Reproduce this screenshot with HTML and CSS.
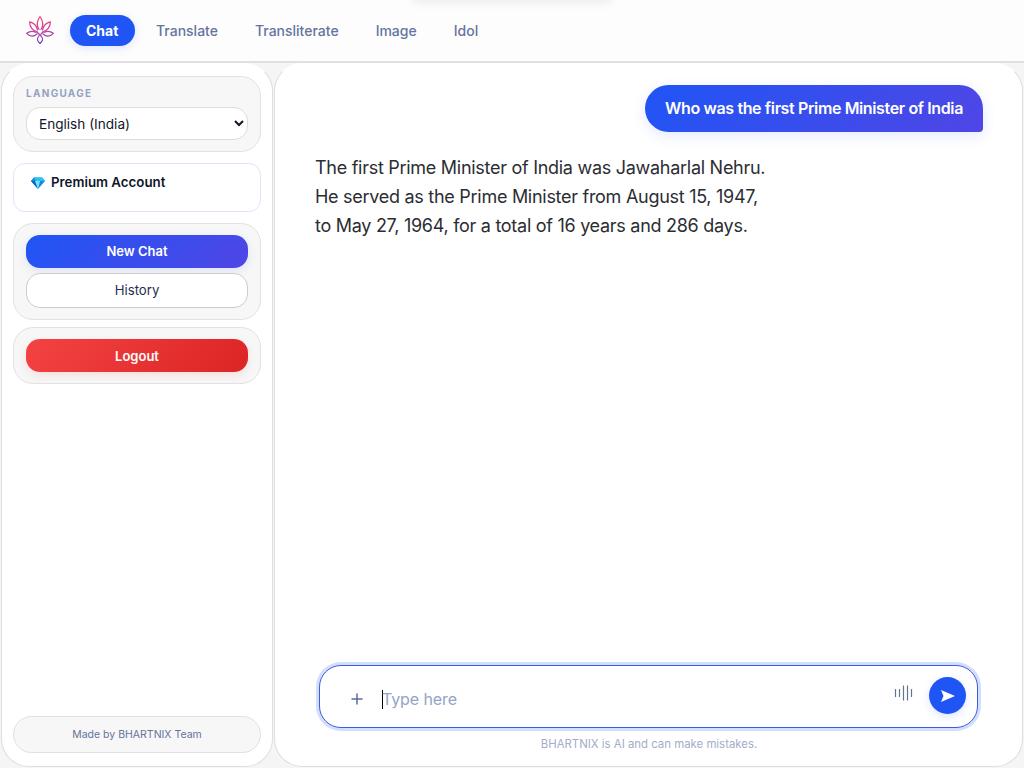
FILE: index.html
```html
<!DOCTYPE html>
<html lang="en">
<head>
  <meta charset="UTF-8">
  <meta name="viewport" content="width=device-width, initial-scale=1.0">
  <title>BHARTNIX</title>
  <link rel="stylesheet" href="styles.css">
</head>
<body>
  <header class="topbar">
    <svg class="logo" viewBox="0 0 30 30" fill="none" stroke="url(#lotus)" stroke-width="1.2" stroke-linejoin="round" stroke-linecap="round">
      <defs>
        <linearGradient id="lotus" gradientUnits="userSpaceOnUse" x1="0" y1="1" x2="0" y2="29">
          <stop offset="0" stop-color="#f5436e"/>
          <stop offset="0.5" stop-color="#c9419c"/>
          <stop offset="1" stop-color="#5b3fb5"/>
        </linearGradient>
      </defs>
      <path d="M14 14.500C11 10.500 12 6 15 1.500C18 6 19 10.500 16 14.500"/>
      <path d="M12.500 17C7.500 15.500 4.700 11.500 4.600 6.800C8.500 7.600 11.500 10.500 12.500 15"/>
      <path d="M17.500 17C22.500 15.500 25.300 11.500 25.400 6.800C21.500 7.600 18.500 10.500 17.500 15"/>
      <path d="M11 17.500C8 15.800 4.500 16.200 1.700 18.300C4.800 21.500 8.500 22 12 19"/>
      <path d="M19 17.500C22 15.800 25.500 16.200 28.300 18.300C25.200 21.500 21.500 22 18 19"/>
      <path d="M12.500 17.500L16.500 21.500C18.500 24 17.500 26.500 15 28.500C12.500 26.500 11.500 24 13.500 21.500L14 20.800M16 19L17.500 17.500"/>
    </svg>
    <nav class="tabs">
      <a class="tab active">Chat</a>
      <a class="tab">Translate</a>
      <a class="tab">Transliterate</a>
      <a class="tab">Image</a>
      <a class="tab">Idol</a>
    </nav>
  </header>

  <div class="layout">
    <aside class="sidebar">
      <div class="card language">
        <label class="label" for="lang">LANGUAGE</label>
        <select class="select" id="lang">
          <option>English (India)</option>
        </select>
      </div>

      <div class="premium">
        <svg class="gem" viewBox="0 0 14 12">
          <path fill="#1687e8" d="M3 0.500H11L14 4L7 12L0 4Z"/>
          <path fill="#0b62c4" d="M0 4H4L7 12Z"/>
          <path fill="#7be3fb" d="M4 4H9L7 12Z"/>
          <path fill="#28c4f2" d="M3 0.500H11L14 4H4Z"/>
          <path fill="#128fe8" d="M3 0.500L5 4H0Z"/>
        </svg>
        <span>Premium Account</span>
      </div>

      <div class="card actions">
        <button class="btn primary">New Chat</button>
        <button class="btn outline">History</button>
      </div>

      <div class="card">
        <button class="btn danger">Logout</button>
      </div>

      <div class="made-by">Made by BHARTNIX Team</div>
    </aside>

    <main class="chat">
      <div class="messages">
        <div class="user-msg">Who was the first Prime Minister of India</div>
        <div class="bot-msg">The first Prime Minister of India was Jawaharlal Nehru.<br>He served as the Prime Minister from August 15, 1947,<br>to May 27, 1964, for a total of 16 years and 286 days.</div>
      </div>

      <div class="composer">
        <svg class="plus" viewBox="0 0 12 12" stroke="#5b6e99" stroke-width="1.500">
          <path d="M6 0.500V11.500M0.500 6H11.500"/>
        </svg>
        <div class="input"><span class="caret"></span>Type here</div>
        <svg class="wave" viewBox="0 0 19 16" stroke="#60788f" stroke-width="1.200">
          <path d="M1.500 4V12M5.500 4V12M9.500 0.500V15.500M13.500 0.500V15.500M17.500 4V12"/>
        </svg>
        <button class="send">
          <svg viewBox="0 0 14 12" width="14" height="12"><path fill="#fff" d="M0 0L14 6L0 12L2.500 6Z"/></svg>
        </button>
      </div>
      <p class="note">BHARTNIX is AI and can make mistakes.</p>
    </main>
  </div>
</body>
</html>
```
FILE: styles.css
```css
* {
  box-sizing: border-box;
}
body {
  margin: 0;
  height: 768px;
  overflow: hidden;
  display: flex;
  flex-direction: column;
  font-family: Inter, "Liberation Sans", sans-serif;
  background: #f5f5f5;
  color: #0f172a;
}
button,
select {
  font-family: inherit;
}

/* Top bar */
.topbar {
  position: relative;
  flex: none;
  height: 63px;
  padding: 0 24px 1px 25px;
  display: flex;
  align-items: center;
  background: #fdfdfd;
  border-bottom: 2px solid #e0e0e0;
}
.topbar::after {
  content: "";
  position: absolute;
  top: -8px;
  left: 412px;
  width: 200px;
  height: 8px;
  border-radius: 4px;
  box-shadow: 0 0 12px rgba(0, 0, 0, 0.13);
}
.logo {
  width: 30px;
  height: 30px;
  margin-right: 15px;
}
.tabs {
  display: flex;
  gap: 5px;
}
.tab {
  height: 31px;
  padding: 0 16px;
  line-height: 31px;
  font-size: 14px;
  font-weight: 500;
  color: #64749f;
  border-radius: 16px;
}
.tab.active {
  width: 65px;
  color: #fff;
  font-weight: 700;
  background: #2055f5;
  box-shadow: 0 2px 8px rgba(32, 85, 245, 0.15);
}

/* Layout */
.layout {
  flex: 1;
  min-height: 0;
  display: grid;
  grid-template-columns: 272px 749px;
  gap: 1px;
  padding: 0 1px 1px;
}
.sidebar,
.chat {
  display: flex;
  flex-direction: column;
  background: #fff;
  border: 1px solid #dedede;
  border-top-color: #fff;
  border-radius: 28px;
}

/* Sidebar */
.sidebar {
  padding: 12px 11px 13px;
}
.card {
  padding: 11px 12px;
  margin-bottom: 7px;
  background: #f7f7f7;
  border: 1px solid #e2e2e2;
  border-radius: 20px;
}
.language {
  height: 76px;
  margin-bottom: 11px;
}
.label {
  display: block;
  height: 19px;
  line-height: 11px;
  font-size: 10px;
  font-weight: 700;
  letter-spacing: 1.3px;
  color: #94a3c4;
}
.select {
  display: block;
  width: 100%;
  height: 33px;
  padding: 1px 1px 0 8px;
  font-size: 13.6px;
  color: #0f172a;
  background: #fff;
  border: 1px solid #dcdcdc;
  border-radius: 14px;
}
.premium {
  height: 49px;
  margin-bottom: 11px;
  padding: 10px 17px;
  display: flex;
  gap: 6px;
  font-size: 13.3px;
  line-height: 17px;
  font-weight: 600;
  background: #fff;
  border: 1px solid #e0e4f6;
  border-radius: 12px;
}
.gem {
  width: 14px;
  height: 12px;
  margin-top: 3px;
}
.actions {
  display: flex;
  flex-direction: column;
  gap: 5px;
}
.btn {
  display: block;
  width: 100%;
  height: 33px;
  padding: 0;
  font-size: 13px;
  font-weight: 600;
  color: #fff;
  border: none;
  border-radius: 14px;
}
.btn.primary {
  padding-bottom: 1px;
  background: linear-gradient(135deg, #2055f5, #4f46e5);
  box-shadow: 0 3px 10px rgba(32, 85, 245, 0.12);
}
.btn.outline {
  height: 35px;
  padding-bottom: 1px;
  font-size: 13.2px;
  font-weight: 400;
  color: #1e2f50;
  background: #fff;
  border: 1px solid #cccccc;
}
.btn.danger {
  background: linear-gradient(135deg, #f44343, #dc2424);
  box-shadow: 0 4px 10px rgba(239, 68, 68, 0.13);
}
.made-by {
  height: 37px;
  margin-top: auto;
  line-height: 35px;
  font-size: 10.5px;
  text-align: center;
  color: #64749b;
  background: #f7f7f7;
  border: 1px solid #e0e0e0;
  border-radius: 19px;
}

/* Chat */
.chat {
  padding: 21px 39px 14px 40px;
}
.messages {
  flex: 1;
  display: flex;
  flex-direction: column;
}
.user-msg {
  align-self: flex-end;
  height: 47px;
  padding: 0 20px;
  line-height: 47px;
  font-size: 16px;
  font-weight: 600;
  letter-spacing: -0.37px;
  color: #fff;
  background: linear-gradient(135deg, #2055f5, #4f46e5);
  border-radius: 24px 24px 4px 24px;
  box-shadow: 0 4px 14px rgba(32, 85, 245, 0.12);
}
.bot-msg {
  margin-top: 21px;
  font-size: 18px;
  line-height: 29px;
  letter-spacing: -0.28px;
  color: #2b2d33;
}
.composer {
  height: 63px;
  margin: 0 5px 0 4px;
  padding: 0 11px 0 31px;
  display: flex;
  align-items: center;
  background: #fff;
  border: 1px solid #3b5be5;
  border-radius: 22px;
  box-shadow: 0 0 0 3px #d3defb;
}
.plus {
  width: 12px;
  height: 12px;
  margin-top: 5px;
}
.input {
  flex: 1;
  display: flex;
  align-items: center;
  margin: 5px 0 0 19px;
  font-size: 16px;
  letter-spacing: -0.1px;
  color: #94a3c8;
}
.caret {
  width: 1px;
  height: 19px;
  margin-right: -1px;
  background: #000;
}
.wave {
  width: 19px;
  height: 16px;
  margin: 0 16px 7px 0;
}
.send {
  width: 37px;
  height: 37px;
  margin-bottom: 2px;
  padding: 0;
  display: flex;
  align-items: center;
  justify-content: center;
  background: #2055f5;
  border: none;
  border-radius: 50%;
  box-shadow: 0 3px 8px rgba(32, 85, 245, 0.15);
}
.note {
  margin: 9px 0 0;
  font-size: 11.4px;
  line-height: 15px;
  text-align: center;
  color: #a3adc8;
}
```
